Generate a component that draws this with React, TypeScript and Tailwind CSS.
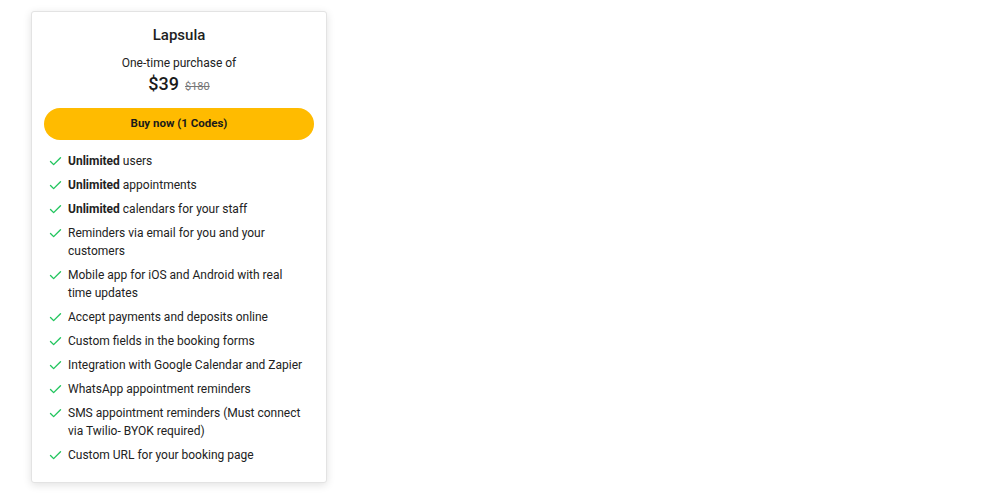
import React from "react";

const features: { bold?: string; text: string }[] = [
  { bold: "Unlimited", text: " users" },
  { bold: "Unlimited", text: " appointments" },
  { bold: "Unlimited", text: " calendars for your staff" },
  { text: "Reminders via email for you and your customers" },
  { text: "Mobile app for iOS and Android with real time updates" },
  { text: "Accept payments and deposits online" },
  { text: "Custom fields in the booking forms" },
  { text: "Integration with Google Calendar and Zapier" },
  { text: "WhatsApp appointment reminders" },
  { text: "SMS appointment reminders (Must connect via Twilio- BYOK required)" },
  { text: "Custom URL for your booking page" },
];

function CheckIcon() {
  return (
    <svg
      viewBox="0 0 24 24"
      className="h-[15px] w-[15px] shrink-0 mt-[2px]"
      fill="none"
      stroke="#22c55e"
      strokeWidth={2.2}
      strokeLinecap="round"
      strokeLinejoin="round"
    >
      <polyline points="20 6 9 17 4 12" />
    </svg>
  );
}

export default function App() {
  return (
    <div className="min-h-screen bg-white font-['Roboto',sans-serif] text-[#222]">
      <div className="ml-[31px] pt-[11px]">
        <div className="w-[296px] rounded-[3px] border border-[#e3e3e3] bg-white px-[12px] pb-[18px] pt-[11px] shadow-[0_2px_8px_rgba(0,0,0,0.12)]">
          <h2 className="text-center text-[15px] leading-[24px] font-medium text-[#1f1f1f]">Lapsula</h2>
          <p className="mt-[7px] text-center text-[12px] leading-[18px]">One-time purchase of</p>
          <div className="flex items-baseline justify-center gap-[6px] leading-[24px]">
            <span className="text-[18px] font-medium text-[#1a1a1a]">$39</span>
            <span className="text-[11px] text-[#777] line-through">$180</span>
          </div>
          <button className="mt-[9px] h-[32px] w-full rounded-full bg-[#ffbb00] text-[11.5px] font-bold text-[#1a1a1a]">
            Buy now (1 Codes)
          </button>
          <ul className="mt-[12px] flex flex-col gap-[6px] pl-[4px] pr-[10px]">
            {features.map((f, i) => (
              <li key={i} className="flex gap-[5px] text-[12px] leading-[18px]">
                <CheckIcon />
                <span>
                  {f.bold && <strong className="font-bold">{f.bold}</strong>}
                  {f.text}
                </span>
              </li>
            ))}
          </ul>
        </div>
      </div>
    </div>
  );
}
